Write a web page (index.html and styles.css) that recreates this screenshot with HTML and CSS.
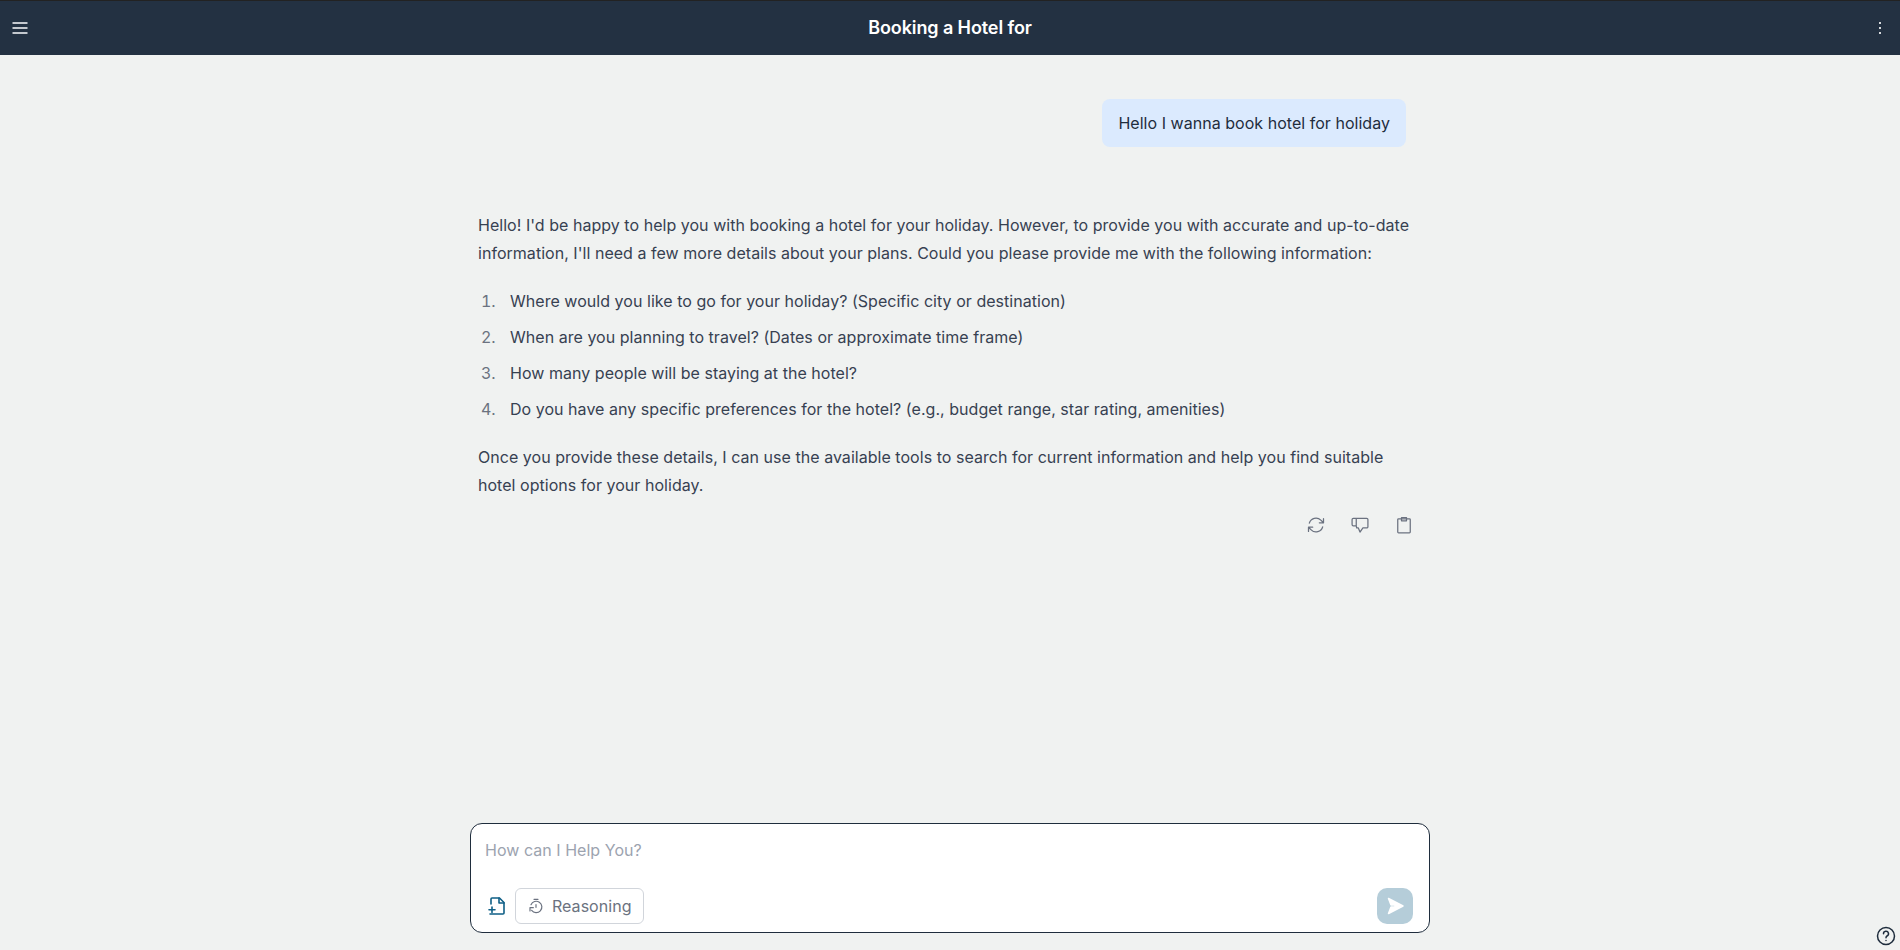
FILE: index.html
```html
<!DOCTYPE html>
<html lang="en">
<head>
    <meta charset="UTF-8">
    <title>Booking a Hotel for</title>
    <link rel="stylesheet" href="styles.css">
</head>
<body>
    <header class="topbar">
        <button class="bar-btn">
            <svg width="20" height="20" viewBox="0 0 20 20" fill="#c4c8ce"><rect x="2.500" y="4" width="15" height="2"/><rect x="2.500" y="9" width="15" height="2"/><rect x="2.500" y="14" width="15" height="2"/></svg>
        </button>
        <h1 class="title">Booking a Hotel for</h1>
        <button class="bar-btn">
            <svg width="20" height="20" viewBox="0 0 20 20" fill="#d5d8dc"><rect x="9" y="4" width="2" height="2"/><rect x="9" y="9" width="2" height="2"/><rect x="9" y="14" width="2" height="2"/></svg>
        </button>
    </header>

    <main class="chat">
        <div class="messages">
            <div class="user-row">
                <div class="user-bubble">Hello I wanna book hotel for holiday</div>
            </div>
            <div class="answer">
                <p>Hello! I'd be happy to help you with booking a hotel for your holiday. However, to provide you with accurate and up-to-date information, I'll need a few more details about your plans. Could you please provide me with the following information:</p>
                <ol>
                    <li>Where would you like to go for your holiday? (Specific city or destination)</li>
                    <li>When are you planning to travel? (Dates or approximate time frame)</li>
                    <li>How many people will be staying at the hotel?</li>
                    <li>Do you have any specific preferences for the hotel? (e.g., budget range, star rating, amenities)</li>
                </ol>
                <p>Once you provide these details, I can use the available tools to search for current information and help you find suitable hotel options for your holiday.</p>
            </div>
            <div class="actions">
                <svg width="20" height="20" viewBox="0 0 24 24" fill="none" stroke="#6b7280" stroke-width="1.500" stroke-linecap="round" stroke-linejoin="round"><path d="M16 9.350h5M3 19.650v-5m0 0h5m-5 0 3.200 3.200a8.250 8.250 0 0 0 13.800-3.700M4 9.850a8.250 8.250 0 0 1 13.800-3.700l3.200 3.200m0-5v5"/></svg>
                <svg width="20" height="20" viewBox="0 0 24 24" fill="none" stroke="#6b7280" stroke-width="1.500" stroke-linecap="round" stroke-linejoin="round"><path d="M4 4h16a1.500 1.500 0 0 1 1.500 1.500V14a1.500 1.500 0 0 1-1.500 1.500h-4.500L12 20.500l-2-5H8L7.500 13H4a1.500 1.500 0 0 1-1.500-1.500v-6A1.500 1.500 0 0 1 4 4zM7.500 4v9"/></svg>
                <svg width="20" height="20" viewBox="0 0 24 24" fill="none" stroke="#6b7280" stroke-width="1.500" stroke-linecap="round" stroke-linejoin="round"><rect x="4.500" y="4.500" width="15" height="17" rx="1"/><path d="M9 3h6v4H9z"/></svg>
            </div>
        </div>

        <div class="composer">
            <div class="placeholder">How can I Help You?</div>
            <div class="composer-row">
                <svg class="attach" width="20" height="20" viewBox="0 0 20 20" fill="none" stroke="#0f5f86" stroke-width="1.600" stroke-linecap="round" stroke-linejoin="round"><path d="M4 8V3a1 1 0 0 1 1-1h7.500L17 6.500V17a1 1 0 0 1-1 1H3"/><path d="M12 2v5h5"/><path d="M5 11v5.500M2 13.800h6"/></svg>
                <button class="reason-btn">
                    <svg width="16" height="16" viewBox="0 0 24 24" fill="none" stroke="#6b7280" stroke-width="1.800" stroke-linecap="round" stroke-linejoin="round"><path d="M9 2h6"/><path d="M12 14V10"/><path d="M5.500 18.500A8.500 8.500 0 1 0 4.500 10"/><path d="M3 19.500v-5h5"/></svg>
                    Reasoning
                </button>
                <button class="send-btn">
                    <svg width="22" height="22" viewBox="0 0 22 22" fill="#fff" stroke="#fff" stroke-width="1.500" stroke-linejoin="round"><path d="M4.500 3.500 19 11 4.500 18.500 7 12h4v-2H7z"/></svg>
                </button>
            </div>
        </div>
    </main>

    <svg class="help" width="20" height="20" viewBox="0 0 20 20" fill="none" stroke="#1f2d3d" stroke-width="1.500" stroke-linecap="round"><circle cx="10" cy="10" r="8.500"/><path d="M7.500 7.800A2.500 2.500 0 1 1 11 10c-.7.400-1 .8-1 1.700"/><path d="M10 14.500v.1"/></svg>
</body>
</html>
```

FILE: styles.css
```css
* {
    box-sizing: border-box;
}

body {
    margin: 0;
    height: 100vh;
    display: flex;
    flex-direction: column;
    overflow: hidden;
    font-family: 'Inter', sans-serif;
    font-size: 16px;
    line-height: 28px;
    letter-spacing: 0.035px;
    color: #374151;
    background-color: #f0f2f1;
}

button {
    font-family: inherit;
    letter-spacing: inherit;
}

.topbar {
    height: 55px;
    flex-shrink: 0;
    display: flex;
    align-items: center;
    justify-content: space-between;
    padding: 0 10px;
    background-color: #233142;
    border-top: 1px solid #222;
}

.bar-btn {
    display: flex;
    padding: 0;
    border: none;
    background: none;
}

.title {
    margin: 0;
    font-size: 18px;
    font-weight: 600;
    line-height: 28px;
    letter-spacing: -0.1px;
    color: #fff;
}

.chat {
    flex: 1;
    width: 960px;
    margin: 0 auto;
    display: flex;
    flex-direction: column;
    justify-content: space-between;
    padding-bottom: 17px;
}

.messages {
    padding: 44px 16px 0 8px;
}

.user-row {
    display: flex;
    justify-content: flex-end;
    padding-right: 8px;
    margin-bottom: 64px;
}

.user-bubble {
    padding: 10px 16px;
    border-radius: 8px;
    background-color: #dbeafe;
    color: #1f2d3d;
}

.answer p {
    margin: 0;
}

.answer ol {
    margin: 20px 0;
    padding-left: 22px;
}

.answer li {
    margin: 8px 0;
    padding-left: 10px;
}

.answer li::marker {
    color: #6b7280;
}

.actions {
    display: flex;
    justify-content: flex-end;
    gap: 24px;
    padding: 16px 0 0 0;
}

.composer {
    height: 110px;
    display: flex;
    flex-direction: column;
    justify-content: space-between;
    padding: 9px 16px 8px 14px;
    background-color: #fff;
    border: 1px solid #1f2d3d;
    border-radius: 12px;
}

.placeholder {
    color: #9ca3af;
    padding-top: 3px;
}

.composer-row {
    display: flex;
    align-items: center;
    gap: 8px;
}

.attach {
    margin-left: 2px;
}

.reason-btn {
    height: 36px;
    display: flex;
    align-items: center;
    gap: 8px;
    padding: 0 12px;
    font-size: 16px;
    color: #6b7280;
    background: #fff;
    border: 1px solid #d1d5db;
    border-radius: 6px;
}

.send-btn {
    width: 36px;
    height: 36px;
    margin-left: auto;
    display: flex;
    align-items: center;
    justify-content: center;
    padding: 0;
    border: none;
    border-radius: 10px;
    background-color: #b5cdd9;
}

.help {
    position: absolute;
    right: 4px;
    bottom: 4px;
}
```
